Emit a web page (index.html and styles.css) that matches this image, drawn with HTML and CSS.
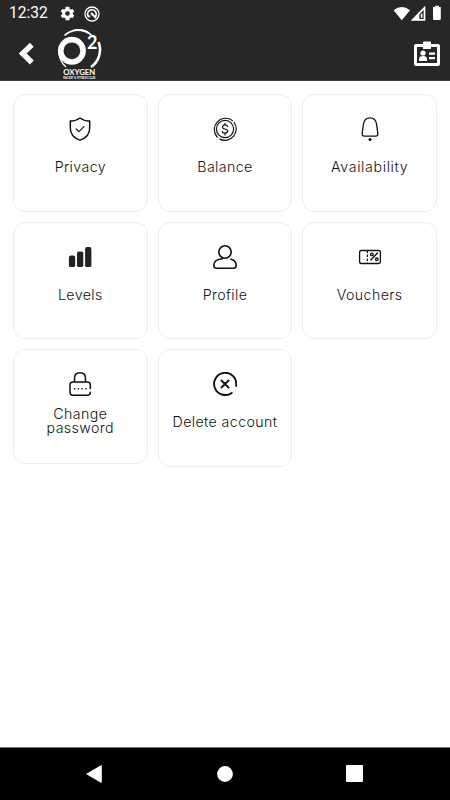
FILE: index.html
```html
<!DOCTYPE html>
<html lang="en">
<head>
<meta charset="utf-8">
<title>Oxygen</title>
<link rel="stylesheet" href="styles.css">
</head>
<body>
<header class="header">
  <div class="status">
    <span class="time">12:32</span>
    <svg class="gear" width="17" height="17" viewBox="0 0 24 24"><path fill="#fff" fill-rule="evenodd" d="M19.400 13a7.500 7.500 0 0 0 0-2l2.200-1.700-2.200-3.800-2.600 1a8 8 0 0 0-1.700-1L14.700 2.500h-5.400l-.4 3a8 8 0 0 0-1.700 1l-2.600-1-2.200 3.800L4.600 11a7.500 7.500 0 0 0 0 2l-2.200 1.700 2.200 3.800 2.600-1a8 8 0 0 0 1.700 1l.4 3h5.400l.4-3a8 8 0 0 0 1.700-1l2.600 1 2.200-3.800zM12 8.700a3.300 3.300 0 1 1 0 6.600 3.300 3.300 0 0 1 0-6.600z"/></svg>
    <svg class="radar" width="16" height="16" viewBox="0 0 16 16" fill="none" stroke="#fff"><circle cx="8" cy="8" r="7" stroke-width="1.300"/><path stroke-width="1.800" d="M4.300 10.400A4.300 4.300 0 1 1 11 11.100M12 12 8 8"/><path fill="#fff" stroke="none" d="M6.300 7.300 8 6.300l1.700 2.500-1.300 1zM3.600 9.500h3L5 12z"/></svg>
    <span class="grow"></span>
    <svg width="52" height="18" viewBox="0 0 52 18" fill="#fff"><path d="M3.600 5.300Q11.800-1.300 20 5.300L11.800 15.300z"/><path fill-rule="evenodd" d="M35.200 1v14.400H21zM33.800 4.600V14h-4.600V9.200z"/><path d="M21 15.400 35.200 1v14.400zM29.200 9.200V14h4.600V4.600z" fill-rule="evenodd"/><path d="M30.800 8.700h1.600v4.200h-1.600z"/><path d="M43 2h2V.7h4V2h1.800v11.800q0 1.300-1.300 1.300h-5.200q-1.300 0-1.300-1.300z"/></svg>
  </div>
  <div class="appbar">
    <svg class="back" width="17" height="24" viewBox="0 0 17 24" fill="none" stroke="#fff" stroke-width="5.500"><path d="M13.800 2.800 4.700 11.500l9.100 9"/></svg>
    <svg class="logo" width="46" height="52" viewBox="0 0 46 52" fill="none" stroke="#fff">
      <path stroke-width="1.700" d="M7.500 7.500A21 21 0 0 1 31 4"/>
      <path stroke-width="2.600" d="M41.500 14A21 21 0 0 1 34 39"/>
      <path stroke-width="1.300" d="M2 21A21 21 0 0 0 9 39"/>
      <path stroke-width="1.600" d="M17 2.400Q27 1 34.500 7"/>
      <circle cx="14.900" cy="22.800" r="11.200" stroke-width="5.600"/>
      <text class="logo-two" x="30" y="20.500">2</text>
      <text class="logo-name" x="6.300" y="46.800" textLength="32" lengthAdjust="spacingAndGlyphs">OXYGEN</text>
      <text class="logo-sub" x="6.300" y="50.500" textLength="32">RACKET &amp; FITNESS CLUB</text>
    </svg>
    <span class="grow"></span>
    <svg class="badge" width="26" height="26" viewBox="0 0 26 26" fill="#fff"><path fill-rule="evenodd" d="M2 3h7V1.500Q9 .5 10 .5h6q1 0 1 1V3h7q2 0 2 2v18q0 2-2 2H2q-2 0-2-2V5q0-2 2-2zM3 6v16h20V6h-6v2H9V6z"/><circle cx="9" cy="12" r="2.600"/><path d="M5 20v-2q0-3 4-3t4 3v2zM15 11.500h6v2.200h-6zM15 16h6v2.200h-6z"/></svg>
  </div>
</header>
<main class="grid">
  <section class="card">
    <svg viewBox="0 0 24 24"><path stroke-width="1.500" d="M12 1Q8 4.100 2.300 3.900V11Q2.300 20 12 23.100 21.700 20 21.700 11V3.900Q16 4.100 12 1z"/><path stroke-width="1.200" d="m8.200 12 2.700 2.600 5-5"/></svg>
    <span class="label privacy">Privacy</span>
  </section>
  <section class="card">
    <svg viewBox="0 0 24 24" stroke-width="1.200"><circle cx="12" cy="12" r="8.600"/><path d="M4.100 20A11.300 11.300 0 0 1 19.500 3.600M21.200 5.500A11.300 11.300 0 0 1 6.900 22.100M14.600 9.400Q14.200 7.900 12 7.900T9.400 9.900Q9.400 11.400 12 12t2.700 2.100Q14.700 16.100 12 16.100T9.300 14.500M12 6.300v1.600M12 16.100v1.800"/></svg>
    <span class="label balance">Balance</span>
  </section>
  <section class="card">
    <svg viewBox="0 0 24 24"><path stroke-width="1.300" d="M6.500 19.100h11q2.900 0 2.300-3L18.500 7Q17.600.9 12 .9T5.500 7L4.200 16.100q-.6 3 2.300 3z"/><circle class="solid" cx="12" cy="22.500" r="1.500"/></svg>
    <span class="label availability">Availability</span>
  </section>
  <section class="card">
    <svg viewBox="0 0 24 24"><g class="bars"><rect x=".9" y="10.600" width="6.300" height="11.500" rx="1.900"/><rect x="9" y="6.400" width="6.300" height="15.700" rx="1.900"/><rect x="17.100" y="2.100" width="6.300" height="20" rx="1.900"/></g></svg>
    <span class="label levels">Levels</span>
  </section>
  <section class="card">
    <svg viewBox="0 0 24 24" stroke-width="1.600"><circle cx="12" cy="7" r="6.200"/><path d="M9.500 13.700Q.8 14.300.8 20.200q0 3 2.700 3h17q2.700 0 2.700-3 0-4.500-5.300-6"/></svg>
    <span class="label profile">Profile</span>
  </section>
  <section class="card">
    <svg viewBox="0 0 24 24"><path stroke-width="1.300" d="M3.400 5.500h17.200q1.800 0 1.800 1.700v9.600q0 1.700-1.800 1.700H3.400q-1.800 0-1.800-1.700V7.200q0-1.700 1.800-1.700z"/><path stroke-width="1.200" stroke-dasharray="2.500 1.500" stroke-linecap="butt" d="M9.400 5.500v13"/><path stroke-width="1.400" d="m19.400 8-6.500 7"/><circle stroke-width="1.300" cx="13.900" cy="9.400" r="1.300"/><circle stroke-width="1.300" cx="18.800" cy="14.300" r="1.300"/></svg>
    <span class="label vouchers">Vouchers</span>
  </section>
  <section class="card tight">
    <svg viewBox="0 0 24 24" stroke-width="1.500"><path d="M6.500 10V6.400Q6.500.8 12 .8t5.500 5.600V10M22.300 16.500V13q0-3-3-3H5q-3 0-3 3v7.200q0 3 3 3h14.300q3 0 3-3"/><path class="dots" d="M5.900 16.700h12.800"/></svg>
    <span class="label change">Change<br>password</span>
  </section>
  <section class="card">
    <svg viewBox="0 0 24 24" stroke-width="1.900"><path d="M23.100 14A11.100 11.100 0 1 0 18.700 20.900M8.500 8.500l7 7M15.500 8.500l-7 7"/></svg>
    <span class="label delete">Delete account</span>
  </section>
</main>
<footer class="nav">
  <svg width="16" height="18" viewBox="0 0 16 18"><path fill="#fff" d="M0 9 14.600.5q1.200-.5 1.200.7v15.600q0 1.200-1.200.7z"/></svg>
  <svg class="home" width="16" height="16"><circle cx="8" cy="8" r="7.900" fill="#fff"/></svg>
  <svg width="17" height="17"><rect width="17" height="17" rx="1" fill="#fff"/></svg>
</footer>
</body>
</html>
```
FILE: styles.css
```css
* { box-sizing: border-box; }
body {
  margin: 0;
  height: 800px;
  display: flex;
  flex-direction: column;
  background: #fff;
  color: #111;
  font-family: Inter, "Open Sans", sans-serif;
  overflow: hidden;
}
svg { display: block; flex: none; }
.grow { flex: 1; }
.header {
  height: 81px;
  background: #272727;
  border-bottom: 1px solid #414040;
}
.status {
  height: 27px;
  display: flex;
  align-items: center;
  padding: 0 8px 0 9px;
}
.time {
  width: 50px;
  color: #fff;
  font: 15.6px/27px Roboto, sans-serif;
}
.radar { margin-left: 8px; }
.appbar {
  height: 53px;
  display: flex;
  align-items: center;
  padding: 0 10px 0 18px;
}
.logo { margin-left: 22px; }
.logo text { fill: #fff; stroke: none; }
.logo-two { font: 700 18px Lato, sans-serif; }
.logo-name { font: 700 7.8px Lato, sans-serif; }
.logo-sub { font: 700 2.7px Lato, sans-serif; }
.grid {
  flex: 1;
  display: grid;
  grid-template-columns: repeat(3, 1fr);
  grid-auto-rows: 117.5px;
  align-content: start;
  align-items: start;
  gap: 10px;
  padding: 13px 13px 0;
}
.card {
  height: 117.5px;
  display: flex;
  flex-direction: column;
  align-items: center;
  gap: 19px;
  padding-top: 22.4px;
  border: 1px solid #ededed;
  border-radius: 12px;
}
.card.tight { height: 115px; gap: 10.5px; }
.card svg {
  width: 24px;
  height: 24px;
  fill: none;
  stroke: #111;
  stroke-linecap: round;
  stroke-linejoin: round;
}
.card .solid { fill: #111; stroke: none; }
.card .bars { fill: #222; stroke: none; }
.card .dots {
  stroke-width: 1.4;
  stroke-dasharray: 1.4 2.4;
  stroke-linecap: butt;
}
.label {
  font-size: 14.2px;
  font-weight: 300;
  line-height: 14px;
  text-align: center;
  white-space: nowrap;
}
.privacy, .profile, .levels { letter-spacing: .4px; }
.availability { letter-spacing: .65px; }
.balance, .vouchers, .change, .delete { letter-spacing: .4px; }
.nav {
  height: 53px;
  display: flex;
  align-items: center;
  justify-content: space-between;
  padding: 0 87px 1px 86px;
  background: #000;
  border-top: 1px solid #777;
}
.home { margin-left: 2px; }
```
